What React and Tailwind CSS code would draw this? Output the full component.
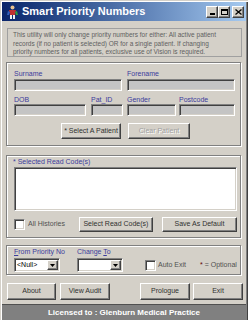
import React from 'react';

const raised =
  'bg-[#d4d0c8] border border-t-white border-l-white border-r-[#404040] border-b-[#404040] shadow-[inset_-1px_-1px_0_#808080]';
const sunken =
  'border border-t-[#808080] border-l-[#808080] border-r-white border-b-white shadow-[inset_1px_1px_0_#404040,inset_-1px_-1px_0_#d4d0c8]';
const group = 'border border-[#808080] shadow-[inset_1px_1px_0_white,1px_1px_0_white]';
const label = 'text-[7px] leading-[9px] text-[#3c3c9c]';

function Field({ className }) {
  return <div className={`h-[12px] bg-[#c4c4c4] ${sunken} ${className}`} />;
}

function Button({ children, className, disabled }) {
  return (
    <div
      className={`flex items-center justify-center text-[7px] ${raised} ${
        disabled ? 'text-[#a0a0a0] [text-shadow:1px_1px_0_white]' : 'text-[#303030]'
      } ${className}`}
    >
      {children}
    </div>
  );
}

function Combo({ value, className }) {
  return (
    <div className={`h-[14px] bg-white flex items-center ${sunken} ${className}`}>
      <span className="flex-1 pl-[2px] text-[7px] text-black">{value}</span>
      <div className={`w-[11px] h-[10px] mr-[1px] flex items-center justify-center ${raised}`}>
        <svg width="5" height="3" viewBox="0 0 5 3">
          <path d="M0 0h5L2.5 3z" fill="black" />
        </svg>
      </div>
    </div>
  );
}

function Check() {
  return <div className={`w-[11px] h-[11px] bg-white ${sunken}`} />;
}

function AppIcon() {
  return (
    <svg width="13" height="14" viewBox="0 0 13 14">
      <circle cx="6.5" cy="2.5" r="2" fill="#e8c090" />
      <path d="M3 5h7l-1 5H4z" fill="#c03030" />
      <path d="M2 6l2 1-1 3H1z" fill="#3060c0" />
      <path d="M11 6l-2 1 1 3h2z" fill="#30a040" />
      <path d="M4 10h2v4H4zM7 10h2v4H7z" fill="#f0f0f0" />
    </svg>
  );
}

export default function App() {
  return (
    <div
      className="w-[248px] h-[320px] overflow-hidden bg-[#d4d0c8] flex flex-col shadow-[inset_1px_1px_0_#d4d0c8,inset_2px_2px_0_white,inset_-1px_0_0_#404040,inset_-2px_0_0_#808080]"
      style={{ fontFamily: '"Liberation Sans", Arial, sans-serif' }}
    >
      {/* Title bar */}
      <div className="mx-[2px] mt-[2px] h-[19px] flex items-center bg-gradient-to-r from-[#0a246a] to-[#a6caf0]">
        <div className="ml-[3px] w-[14px] flex justify-center">
          <AppIcon />
        </div>
        <span className="ml-[3px] text-[11px] font-bold text-white leading-none">Smart Priority Numbers</span>
        <div className="ml-auto mr-[2px] flex items-center">
          <div className={`w-[12px] h-[12px] flex items-end justify-center pb-[2px] ${raised}`}>
            <div className="w-[5px] h-[2px] bg-black" />
          </div>
          <div className={`w-[12px] h-[12px] flex items-center justify-center ${raised}`}>
            <div className="w-[7px] h-[6px] border border-black border-t-2" />
          </div>
          <div className={`ml-[2px] w-[12px] h-[12px] flex items-center justify-center ${raised}`}>
            <svg width="7" height="6" viewBox="0 0 7 6">
              <path d="M0.5 0.5l6 5M6.5 0.5l-6 5" stroke="black" strokeWidth="1.3" />
            </svg>
          </div>
        </div>
      </div>

      {/* Info */}
      <div className="mt-[7px] ml-[7px] mr-[6px] h-[29px] border border-[#a0a0a0] pl-[5px] pt-[2px] text-[6.5px] leading-[8.5px] text-[#606060] whitespace-nowrap">
        <p>This utility will only change priority numbers for either: All active patient</p>
        <p>records (if no patient is selected) OR for a single patient. If changing</p>
        <p>priority numbers for all patients, exclusive use of Vision is required.</p>
      </div>

      {/* Patient */}
      <div className={`mt-[5px] ml-[6px] mr-[7px] h-[84px] pl-[7px] pt-[6px] ${group}`}>
        <div className="flex">
          <div className="w-[108px]">
            <div className={label}>Surname</div>
            <Field className="mt-[1px] w-[108px]" />
          </div>
          <div className="ml-[5px] w-[108px]">
            <div className={label}>Forename</div>
            <Field className="mt-[1px] w-[108px]" />
          </div>
        </div>
        <div className="flex mt-[4px]">
          <div>
            <div className={label}>DOB</div>
            <Field className="w-[72px]" />
          </div>
          <div className="ml-[5px]">
            <div className={label}>Pat_ID</div>
            <Field className="w-[32px]" />
          </div>
          <div className="ml-[4px]">
            <div className={label}>Gender</div>
            <Field className="w-[49px]" />
          </div>
          <div className="ml-[3px]">
            <div className={label}>Postcode</div>
            <Field className="w-[56px]" />
          </div>
        </div>
        <div className="flex mt-[7px]">
          <Button className="ml-[47px] w-[60px] h-[16px]">* Select A Patient</Button>
          <Button disabled className="ml-[7px] w-[62px] h-[16px]">Clear Patient</Button>
        </div>
      </div>

      {/* Read codes */}
      <div className={`mt-[9px] ml-[6px] mr-[7px] h-[83px] pl-[6px] pt-[1px] ${group}`}>
        <div className={label}>* Selected Read Code(s)</div>
        <div className={`mt-[1px] ml-[1px] w-[223px] h-[44px] bg-white ${sunken}`} />
        <div className="flex items-center mt-[6px] ml-[1px]">
          <Check />
          <span className="ml-[3px] text-[7px] text-[#505050]">All Histories</span>
          <Button className="ml-[14px] w-[74px] h-[15px]">Select Read Code(s)</Button>
          <Button className="ml-[9px] w-[75px] h-[15px]">Save As Default</Button>
        </div>
      </div>

      {/* Priority */}
      <div className={`mt-[7px] ml-[6px] mr-[7px] h-[30px] pl-[7px] pt-[1px] ${group}`}>
        <div className="flex">
          <div>
            <div className={label}>
              <span className="underline">F</span>rom Priority No
            </div>
            <Combo value="<Null>" className="mt-[2px] w-[46px]" />
          </div>
          <div className="ml-[12px]">
            <div className={label}>
              Change <span className="underline">T</span>o
            </div>
            <Combo value="" className="mt-[2px] w-[46px]" />
          </div>
          <div className="ml-[22px] mt-[12px] flex items-center">
            <Check />
            <span className="ml-[2px] text-[7px] text-[#505050]">Auto Exit</span>
          </div>
          <div className="ml-[14px] mt-[12px] flex items-center text-[7px] text-[#505050]">
            <span className="text-[#600000]">*</span>
            <span className="ml-[2px]">= Optional</span>
          </div>
        </div>
      </div>

      {/* Buttons */}
      <div className="mt-[8px] ml-[7px] h-[17px] flex">
        <Button className="w-[49px]">About</Button>
        <Button className="ml-[4px] w-[50px]">View Audit</Button>
        <Button className="ml-[30px] w-[50px]">Prologue</Button>
        <Button className="ml-[3px] w-[50px]">Exit</Button>
      </div>

      {/* Status */}
      <div className="mt-[4px] mx-[2px] h-[16px] bg-[#808080] border-t border-[#505050] flex items-center justify-center text-[8px] font-bold text-white">
        Licensed to : Glenburn Medical Practice
      </div>
    </div>
  );
}
